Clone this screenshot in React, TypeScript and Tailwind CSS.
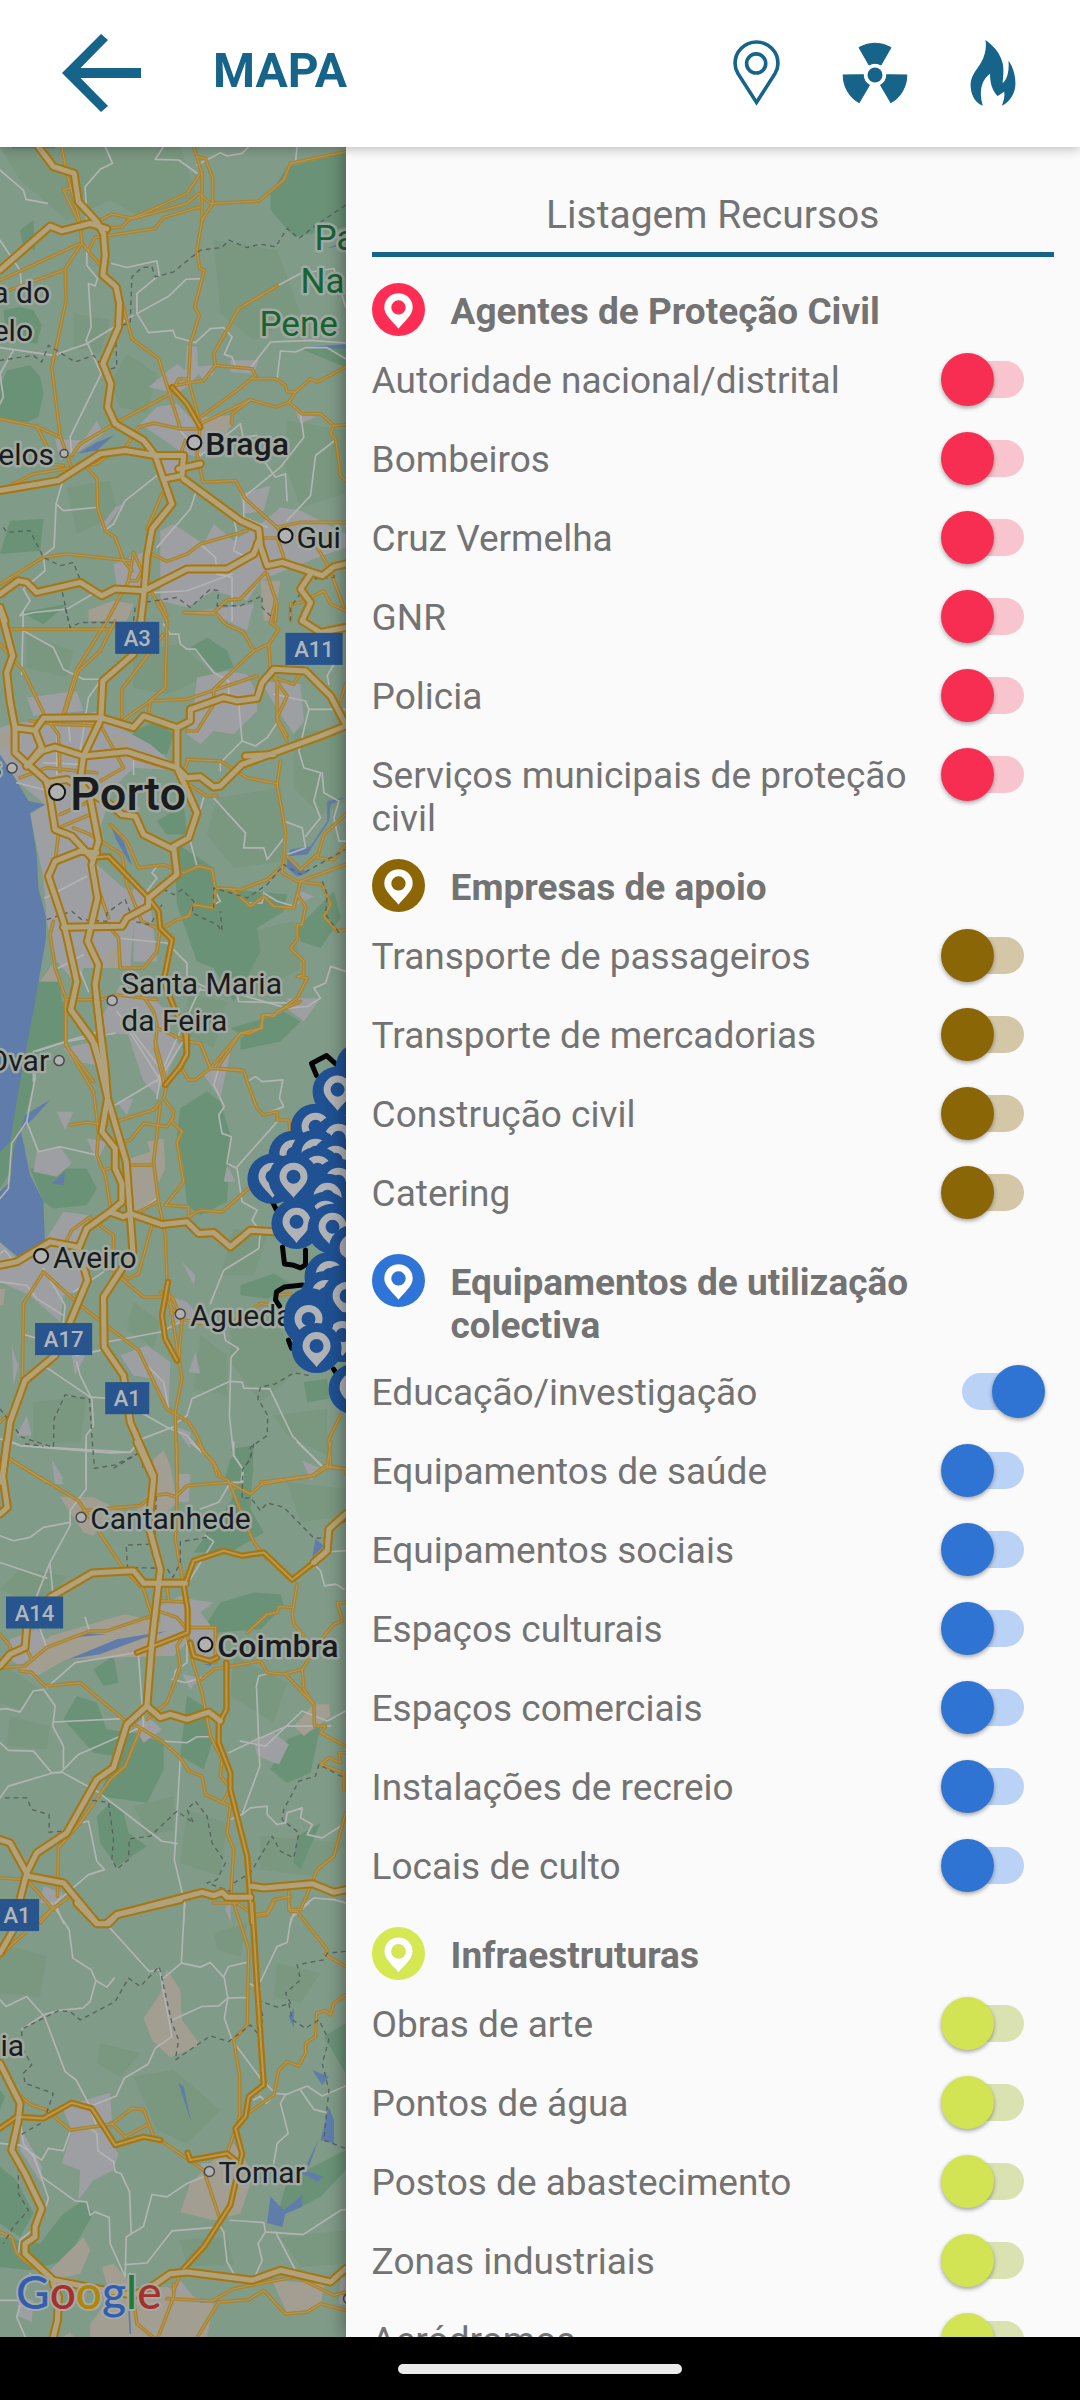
import { useState } from "react";

type Tile = {
  y: number;
  hills: string[];
  forest: string[];
  urban: string[];
  sand: string[];
  water: string[];
  local: string[];
  regional: string[];
  trunk: string[];
  motorway: string[];
  border: string[];
};

/* Each tile holds its shapes in a grid three times finer than the map's own. */
const tiles: Tile[] = [
  {
    y: 140,
    hills: [
      "0,20 540,20 600,200 420,230 330,180 200,240 60,120",
      "640,300 830,330 900,520 760,600 660,520",
      "380,640 470,700 440,820 360,800 330,730",
      "860,840 1035,870 1035,1060 900,1100 850,960",
      "200,1040 330,1020 350,1120 230,1180",
      "220,520 330,540 300,640 220,620",
    ],
    forest: [
      "860,80 1035,40 1035,260 940,280 880,290 810,210 810,160",
      "10,510 60,500 100,510 125,555 110,610 20,600",
      "0,740 20,690 90,675 120,710 130,760 115,830 70,850 0,830",
      "30,1140 130,1135 120,1230 0,1240",
      "900,625 1035,620 1035,680 960,650",
      "60,270 100,240 105,330 70,320",
    ],
    urban: [
      "445,740 530,670 555,690 560,615 590,620 595,700 570,730 530,760",
      "470,800 530,790 600,860 700,850 600,950 550,940 420,850",
      "690,660 775,660 760,700 690,695",
      "580,680 640,675 640,700 610,720",
      "165,895 250,900 290,840 310,880 240,930 180,960",
      "480,1170 520,1150 610,1210 640,1150 700,1200 780,1150 840,1100 900,1110 1035,1180 1035,1220 900,1270 780,1320 740,1380 640,1350 560,1400 480,1380",
      "340,1270 440,1230 440,1340 350,1340",
      "720,1060 810,1035 790,1110 730,1120",
      "345,1100 370,1090 310,1170 300,1160",
      "880,800 945,830 900,850",
      "480,950 540,960 540,1010 490,1020",
    ],
    sand: [
      "265,1410 340,1380 370,1440 265,1440",
      "600,830 690,825 680,880 600,870",
      "780,1320 840,1320 820,1440 790,1440",
    ],
    water: [
      "232,940 290,905 340,885 290,930",
      "915,620 1035,612 1035,625",
      "980,325 1035,300 1030,315",
      "36,20 165,20 165,25 36,25",
    ],
    local: [
      "0,90 70,150 78,178 142,190",
      "315,20 337,70 300,88 255,140 260,250",
      "490,20 465,58 535,60 598,105",
      "590,75 660,38 680,48 725,40 745,20",
      "890,20 885,65",
      "260,320 260,375 292,415 285,437 265,430 273,560 258,600 303,700 210,890 215,940",
      "335,370 380,382 470,362 477,405",
      "607,415 558,417 505,468 410,520 445,577 518,570 525,590 585,607 630,565 670,562 695,590 672,642 695,650 708,685",
      "410,520 410,460 470,410",
      "400,525 260,610 160,645 0,622",
      "0,300 60,390 65,440",
      "830,437 900,400 1000,385 1035,500",
      "750,683 810,605 930,600 1035,608",
      "830,715 840,632 885,635 915,622 980,622 1035,655",
      "900,820 910,890 840,980 730,1070 730,1130 800,1160",
      "1003,900 945,945 930,1065 860,1140",
      "540,870 600,945 720,850 728,890 770,885",
      "470,1005 375,1080 340,1150 315,1168",
      "185,1030 168,1090 190,1110 295,1100",
      "168,1090 162,1220 130,1245 135,1290 70,1345 90,1380 60,1425 100,1415 200,1405 295,1350",
      "585,1060 570,1105 470,1220",
      "600,1210 645,1250 650,1300 695,1310 695,1440",
      "790,960 825,1010 855,1000 860,1080",
      "432,1357 560,1350 695,1300",
      "0,790 10,770 0,700 40,630",
      "700,1130 710,1180 700,1230 740,1250",
    ],
    regional: [
      "185,20 200,100 240,245 245,310 195,385 198,480 155,680 180,885 212,975",
      "215,142 190,150 235,245",
      "580,20 605,100 605,240 590,330 598,385 612,390 583,500 597,525 570,610 565,720 600,850 590,940 608,1025 705,1020 735,1075 830,1160",
      "590,50 615,55 637,115 637,190 605,240",
      "1035,35 870,70 850,120 775,183 630,190 595,160 560,190 400,235 335,222 290,245",
      "600,100 560,160 430,220 390,235 365,260 320,265",
      "600,200 490,232 465,265 285,292 265,330",
      "0,420 240,310",
      "0,460 190,390",
      "245,310 300,375",
      "350,430 395,595 475,655 505,750 540,865",
      "0,835 110,858 180,890",
      "110,858 150,935",
      "0,960 60,960 190,975",
      "525,735 535,715 565,715",
      "520,755 360,840 240,910 215,945",
      "600,865 540,865 460,848 415,860 370,930",
      "830,437 715,505 640,640 645,675 755,685 765,705 710,750 600,830",
      "645,675 610,720 525,735",
      "755,715 825,715 855,735 860,755 885,755 865,785 825,800 750,778 600,850",
      "885,755 930,715 950,725 1035,680",
      "865,785 905,820 960,820 1000,855 1035,853",
      "1000,855 990,880 1005,895 1020,1005 1035,1020",
      "260,980 290,1015 293,1105 315,1170 345,1190 370,1260 395,1290",
      "0,1330 130,1250 200,1240 390,1260",
      "485,1060 440,1165",
      "455,1240 500,1262 560,1240 600,1210 740,1170",
      "850,1192 830,1160 900,1145 1035,1145",
      "780,1192 830,1192 850,1250",
      "330,940 290,970 260,975 100,1000 40,1030",
      "320,1440 385,1320 400,1235 425,1290 410,1320 385,1320",
      "455,1355 500,1440",
      "795,1295 720,1375 680,1378 640,1415 550,1415",
      "800,1300 830,1390 825,1440",
      "950,1220 985,1280 1030,1400",
      "870,1440 870,1390 900,1385 970,1350 990,1390 1035,1410",
      "695,850 695,820 750,778",
      "555,900 540,945",
    ],
    trunk: ["515,740 560,790 600,860"],
    motorway: [
      "115,20 160,80 222,100 235,185 290,245 310,280 315,345 308,405 348,440 358,490 355,560 308,670 332,730 322,800 345,850 430,900 465,945 515,1090 455,1165 440,1250 432,1350 422,1440",
      "0,390 150,258 185,272 270,250 320,266",
      "0,1050 175,1020 300,940 375,930 465,945 550,945 545,1005 495,1015",
      "535,985 600,970",
      "550,1015 720,1140 775,1165 780,1215 800,1275 845,1265 965,1305 1000,1278 1035,1270",
      "775,1200 760,1240 680,1285 560,1285 432,1350 345,1345 305,1365 240,1325 110,1355 80,1325 55,1320 0,1360",
      "930,1300 900,1345 930,1385 905,1440",
      "0,1400 15,1440",
    ],
    border: [
      "1035,195 940,260 895,295 860,265 825,320 780,312 740,322 685,300 665,322 600,330 520,395 465,410 455,380 425,382 395,410 390,545 345,565 350,680 315,690 280,645 225,665 145,615 125,665 100,645 0,660",
      "10,1160 20,1175 90,1170 130,1250 180,1275 220,1265 245,1330 185,1345 205,1440",
      "400,1440 405,1400 430,1385 530,1370 570,1400 630,1345 655,1350 650,1395 720,1395 785,1365 785,1400 820,1435",
      "870,1440 870,1400 930,1315 1000,1310 1005,1275 1035,1265",
    ],
  },
  {
    y: 600,
    hills: [
      "650,590 840,560 850,780 700,800 620,700",
      "880,380 1035,400 1035,600 960,640 880,560",
      "400,150 540,130 640,220 500,280 400,260",
      "700,1000 880,960 900,1100 760,1180",
      "80,100 220,150 200,230 80,200",
      "560,1180 680,1200 640,1340 560,1300",
    ],
    forest: [
      "65,35 200,10 130,70",
      "470,660 550,610 560,700 500,700",
      "520,720 640,800 650,860 860,880 850,930 770,980 780,1050 700,1200 640,1100 590,1080 530,910",
      "110,1140 180,1140 195,1310 80,1350",
      "890,980 1000,870 1020,950 960,1040 900,1020",
      "720,1310 850,1230 900,1260 840,1320 720,1345",
      "570,140 620,110 680,150 700,200 650,215",
      "400,390 470,360 520,400 500,460 400,440",
    ],
    urban: [
      "30,370 180,350 300,330 340,370 450,430 520,490 560,510 400,500 340,560 300,680 290,790 370,860 450,880 400,970 390,1100 250,1100 230,1150 170,1080 140,960 130,830 90,640 135,610 50,540 0,460 0,380",
      "80,290 230,270 250,330 100,345",
      "590,230 680,210 740,220 770,280 770,330 700,400 640,390 600,430 560,400 580,320",
      "780,240 900,250 910,360 880,400 840,340",
      "400,860 450,900 470,1080 400,1080",
      "280,1290 360,1150 460,1190 510,1240 500,1440 460,1440 390,1300",
      "860,1190 960,1190 910,1260 860,1220",
      "600,30 760,10 740,90 680,60",
      "900,870 940,885 890,910",
    ],
    sand: [
      "260,30 340,0 400,10 380,60 290,60",
      "340,400 380,410 380,450 330,450",
      "120,1140 160,1085 180,1140",
      "0,390 20,395 30,430 0,450",
      "320,1060 350,1030 355,1100 320,1100",
      "340,600 420,620 400,660 350,640",
    ],
    water: [
      "0,460 50,540 85,600 135,610 90,635 110,760 115,860 138,950 138,1010 105,1200 75,1350 50,1440 0,1440",
      "330,670 370,720 395,790 385,780 350,720",
      "870,745 930,735 980,660 980,600 1035,590 990,610 985,660 920,760 860,765",
      "860,765 920,815 890,825 860,800",
    ],
    local: [
      "70,30 65,220",
      "70,90 160,140 190,205 250,235 300,235",
      "490,70 510,100 535,100 540,130 560,145 585,145 640,215 685,240 685,290",
      "820,280 915,300 925,325 1035,325",
      "925,325 895,450 910,500 960,515 940,600 960,650 915,705",
      "715,310 725,420 660,485 660,510",
      "725,420 765,435 800,410 830,365",
      "635,585 735,695 730,740 790,740 800,775 855,705",
      "610,590 570,720 590,795",
      "205,370 210,420",
      "300,240 265,290 240,450",
      "850,660 905,680 915,740 860,760",
      "965,515 970,575 1015,600 1000,650 1015,720 1035,720",
      "130,485 240,490",
      "400,470 400,520",
      "50,545 130,565",
      "170,400 170,520",
      "135,890 260,825",
      "350,1010 500,1025 560,1085 560,1130 620,1160",
      "100,1440 100,1350 195,1320 300,1290",
      "350,1230 480,1400",
      "560,1170 600,1165 720,1180 860,1220 920,1215 960,1190 940,1160 975,1145 990,1095 1035,1110",
      "600,1160 470,1440",
      "470,795 455,815 470,830 440,870",
      "645,870 660,900 640,910",
      "740,905 785,905 790,875 830,900 880,915",
      "985,250 980,225 1000,190",
      "175,1100 250,1060",
      "240,1110 265,1170",
      "710,1180 715,1200 860,1205",
    ],
    regional: [
      "30,85 330,85",
      "320,60 230,205 180,370",
      "345,60 300,150 235,210 195,335",
      "500,60 495,260 450,300 365,360",
      "490,100 365,265 365,350",
      "0,130 70,210 135,345 175,400 180,510",
      "450,300 560,295 770,225",
      "450,300 445,345",
      "90,360 180,370 300,375",
      "305,380 370,500 300,540",
      "400,470 500,500",
      "560,390 590,390 640,310 640,265",
      "640,265 760,150 730,95 675,70 650,40 550,35",
      "760,150 805,130 835,85 810,65 825,0",
      "805,130 810,205",
      "830,240 830,360 860,420",
      "820,230 860,285 830,350 860,405",
      "840,480 830,550 855,690 850,770 845,815 890,840 965,850 990,910 970,945 1010,990 1035,985",
      "560,475 660,480 700,505 740,530 830,548",
      "550,510 565,475",
      "220,680 270,700 365,760 380,850 425,960 470,980",
      "330,670 380,720 415,800 490,790 550,815 595,795 635,805 645,860 720,865 800,835 850,790",
      "645,860 640,920 580,910 565,945 530,955 480,985",
      "690,860 750,915 790,885 820,915 880,920 900,840 1035,790",
      "890,880 915,915 905,970 890,970 890,1015 870,1040 910,1080 910,1120 890,1125 920,1130 890,1190 820,1240 785,1240 785,1280 720,1295 650,1400 720,1405",
      "1035,730 1000,775 950,770 970,700 1035,640",
      "860,765 900,805 950,760",
      "175,700 165,780",
      "175,680 270,640",
      "60,530 140,500 290,515",
      "180,640 270,600",
      "160,960 150,1000 165,1100 197,1190 197,1330 280,1440",
      "197,1195 300,1195 350,1180 470,1195",
      "275,800 290,850 325,950",
      "330,980 355,1010 360,1100 430,1100 470,1050 480,985",
      "420,1170 460,1230 470,1270 465,1340 490,1440",
      "470,1280 560,1320 600,1325 630,1400",
      "550,540 620,585 650,585",
      "820,230 880,250 900,215",
      "1035,250 1020,300",
      "480,0 500,45",
    ],
    trunk: ["290,768 325,765 445,890 475,930 480,980 515,1015 490,1140 555,1300 560,1360 540,1395"],
    motorway: [
      "422,60 400,160 308,240 302,355 250,465 240,540 270,590 295,720 275,790 292,890 262,1020 295,1090 285,1150 300,1290 315,1440",
      "0,20 38,165 20,215 30,300 45,380 45,455 140,540 150,590 165,685 215,705 275,770",
      "45,380 105,388 130,352 302,350 400,380 430,345 530,380 570,360 570,325 670,290 710,300 770,292 785,245 820,205 915,210 990,285 1035,370",
      "530,380 530,500 590,635 565,710 520,735 530,820 445,890 445,915 380,950 365,975 190,978",
      "105,388 125,440 80,495",
      "80,495 125,450 165,438 250,465 380,452 530,500 560,530 600,527 640,558 660,555 725,490 850,445 960,405 1035,375",
      "240,750 165,780 145,825 190,960 230,1140 212,1225 275,1310 315,1440",
      "240,750 290,755",
      "140,545 200,535 330,610 365,640 405,645 430,700 520,745",
      "905,60 960,95 1035,80",
      "735,465 820,460",
    ],
    border: [
      "195,20 210,80 240,65 345,65",
      "140,955 215,930 245,955 320,960 320,935 375,895 400,960 450,970 485,910",
      "450,890 480,860 520,880 545,865 580,900 575,935 650,970 665,990 660,930",
      "640,920 640,860 740,890 800,850 850,790 900,820 1035,745",
      "965,840 980,880 975,940 1020,1000",
    ],
  },
  {
    y: 1000,
    hills: [
      "690,960 840,980 900,1100 780,1200 690,1080",
      "700,680 800,700 760,820 660,820",
      "100,1200 260,1180 240,1320 100,1320",
      "600,1000 680,1060 680,1180 580,1160",
      "400,900 480,960 460,1040 380,980",
      "820,1240 980,1220 980,1360 860,1300",
    ],
    forest: [
      "105,0 190,0 197,120 130,150 70,360 30,440 50,250",
      "540,320 620,270 660,300 690,400 680,600 600,640 560,610 550,500 530,400",
      "720,850 820,815 880,850 800,890 720,880",
      "0,400 60,380 75,440 0,560",
      "90,500 260,500 290,560 260,610 160,620 130,600",
      "690,1370 740,1340 760,1400 750,1440 670,1440",
      "910,1140 980,1130 985,1190 920,1200",
      "690,80 830,40 860,70 760,120",
    ],
    urban: [
      "110,450 180,435 215,485 170,525 100,510",
      "0,800 120,740 190,630 270,640 240,740 260,860 190,880 180,960 90,880 0,840",
      "0,720 50,770 0,800",
      "360,1060 440,1030 510,1080 505,1220 460,1130 400,1120",
      "610,220 690,150 660,290",
      "380,90 500,90 540,130 470,280 430,240",
      "170,330 220,330 195,385",
      "190,140 280,120 290,190 220,180",
      "260,410 320,420 290,480",
      "565,1110 585,1050 600,1115",
      "50,1300 80,1240 95,1300",
      "155,1370 190,1430 165,1440",
      "545,780 585,820 580,850",
      "500,880 560,900 620,970 520,960",
      "350,300 400,290 380,340",
      "215,1060 255,1060 225,1120",
      "520,1270 570,1290 570,1340",
      "670,540 680,490 705,540",
      "35,1030 55,1090 40,1150",
    ],
    sand: [
      "440,420 490,410 495,500 465,560 470,600 400,630 390,470 450,450",
      "460,1380 490,1345 505,1440 450,1440",
      "0,860 15,860 10,910 0,910",
    ],
    water: [
      "0,0 105,0 60,240 30,420 0,450",
      "60,380 90,520 130,600 135,730 60,770 0,720 0,570 30,540 40,450",
      "75,340 150,295 100,350 60,390",
      "155,545 195,510 190,550",
    ],
    local: [
      "110,160 105,230 80,360 35,425 25,560 0,590",
      "80,360 115,450 180,435 290,460",
      "110,150 200,120 345,95",
      "345,310 480,230 560,100",
      "655,200 640,250 672,315 655,340 665,395 693,405 680,485 710,500 725,600 770,625 755,655 780,690 775,740 670,805 630,905",
      "710,495 830,360",
      "740,240 765,225 785,240 847,235 837,290 850,315 800,335",
      "670,985 675,1015 715,1040 692,1065 687,1240 700,1360 727,1400 727,1440",
      "687,1138 725,1140 730,1158 808,1160 875,1300 970,1400",
      "687,1138 575,1190 560,1240 525,1265",
      "0,840 80,850 110,890 190,940",
      "130,800 195,910 190,960",
      "65,995 130,1015 230,1060 300,1045 320,1020 480,990 540,960",
      "130,1090 270,1185 350,1190 500,1275 560,1300 605,1350",
      "230,1080 240,1120 275,1190 280,1270 258,1300 258,1440",
      "0,1310 60,1330 390,1350 425,1310 530,1270",
      "430,1080 490,1140 505,1220",
      "400,640 470,590",
      "385,85 480,235 470,290",
      "220,870 310,810",
      "0,755 15,745 50,790",
    ],
    regional: [
      "197,0 197,130 280,270 295,390 290,460 315,520 330,610",
      "465,120 500,250 490,290 520,330 515,360 545,390 530,420 550,540 495,610 565,615 565,645 600,625 665,630 750,555",
      "480,310 460,480 475,600 495,700 500,840 545,1130 525,1230 530,1440",
      "345,360 460,325 480,300",
      "210,370 260,362 320,370",
      "355,425 390,415 430,365 500,375 520,345",
      "380,490 455,490",
      "310,505 345,495",
      "540,195 565,235 585,235 630,200 730,208 740,240 770,320 790,340 830,330 830,355 865,355 870,400",
      "560,120 600,125 630,200 720,95 750,95 780,80 790,40 820,45 830,30 900,0",
      "400,640 470,600",
      "455,670 415,815 385,830 330,800",
      "270,650 340,700 340,760",
      "270,645 215,685 195,725",
      "130,810 70,905 67,1130",
      "130,810 240,910 415,1045 500,1220 565,1260 590,1300 610,1350 640,1380 660,1420",
      "340,810 430,885 515,885 545,950 535,1080",
      "480,870 540,950 600,965 690,965 780,905 830,910",
      "30,1370 140,1440",
      "0,1260 20,1240",
      "1020,1240 985,1310 990,1390",
      "780,1440 935,1420 975,1390 1035,1400 1035,1415",
      "830,880 870,875",
    ],
    trunk: ["560,100 560,155 540,195 495,250", "503,840 485,940 495,1010 530,1075"],
    motorway: [
      "212,25 285,130 322,290 305,390 345,440 345,500 365,545 365,600 330,630 260,680 235,740 262,835 210,960 165,1060 75,1135 30,1260 5,1440",
      "290,0 315,200 322,290 378,480 390,640 398,750 310,885 312,1035 370,1120 390,1260 460,1420",
      "330,630 370,645 390,635 485,668 560,660 595,695 640,692 690,735 750,685 820,690",
      "0,790 50,780 150,720 230,735",
    ],
    border: [
      "0,1220 65,1305 160,1335 162,1250 195,1178 268,1192 275,1300 283,1398 345,1388 420,1350 430,1400 465,1425",
      "925,1120 880,1112 825,1145 780,1155 772,1190 802,1240 800,1300 750,1335 750,1370 727,1400",
    ],
  },
  {
    y: 1440,
    hills: [
      "60,380 200,400 140,500 0,440",
      "860,120 1035,140 1035,220 900,240",
      "0,660 120,740 60,800 0,780",
      "400,1090 520,1060 520,1160 440,1180",
      "700,640 860,720 820,840 690,760",
      "560,1100 680,1140 660,1300 540,1260",
      "30,820 150,850 140,920 20,910",
      "780,1180 1035,1200 940,1300 780,1280",
    ],
    forest: [
      "690,20 760,10 750,200 790,270 690,330 580,330 690,180 730,80",
      "660,480 760,450 840,455 850,490 780,560 650,570 620,540",
      "190,830 230,760 290,780 320,860 400,870 490,900 490,980 440,1080 300,1060 340,940 280,930",
      "290,1120 330,1080 370,1110 385,1170 440,1210 350,1270 300,1200",
      "280,680 340,640 355,720 310,730",
      "560,760 610,790 635,900 610,980 540,940",
      "810,980 860,890 960,850 930,990 860,1020",
      "880,1260 890,1180 960,1140 900,1280",
    ],
    urban: [
      "480,490 540,460 570,470 640,480 600,510 640,560 640,640 570,650 560,600 520,640 490,640 480,540",
      "155,55 190,125 165,125",
      "30,590 110,560 150,600 60,670 30,650",
      "760,890 820,870 865,905 835,965 770,940",
      "400,850 440,820 485,860 430,900",
      "535,95 570,95 565,180 535,180",
      "905,55 965,80 930,115",
      "545,695 600,705 570,740",
      "130,1330 190,1350 170,1385 120,1380",
      "675,1390 690,1390 690,1440",
    ],
    sand: [
      "180,165 280,165 350,200 280,280 250,270",
      "460,50 490,25 510,70 530,180 440,270 410,200 460,130",
      "60,680 150,580 375,515 480,540 495,640 200,650 100,705",
      "880,850 940,785 985,785 990,820 910,880",
    ],
    water: [
      "205,650 350,590 500,565 420,590 300,635",
      "220,585 260,572 320,575",
      "935,345 945,290 970,310",
      "608,664 635,664 630,670",
    ],
    local: [
      "40,0 60,10 330,32 390,30 410,5",
      "258,0 258,140 210,205 210,250 150,360 110,460",
      "210,240 130,255 90,285 40,295 0,280",
      "0,360 140,407",
      "150,365 158,450",
      "700,0 700,40 727,80 722,120 690,120 655,180 600,200",
      "890,0 970,75",
      "570,0 610,35",
      "615,280 640,297 570,410",
      "120,560 140,615",
      "255,525 268,565",
      "410,630 225,660 140,735",
      "415,640 430,850 235,935 180,990 160,990 25,1030 0,1065",
      "0,800 20,798 60,808 100,745 130,740 165,790 158,850 190,910 190,975",
      "160,838 370,828",
      "0,900 25,923 100,925 155,990 185,988 290,1045 485,1195 530,1202",
      "540,945 522,1250 553,1380 550,1440",
      "485,895 560,900 590,882 630,882",
      "560,600 560,660 525,685 517,740",
      "515,710 555,720 605,705",
      "820,688 775,700 768,730 778,970 725,1115 690,1130",
      "725,1115 750,1095 800,1090 800,1115 830,1145 855,1140 860,1110 905,1095 900,1125 935,1145 920,1175 965,1185 1020,1150",
      "1035,805 980,835 905,805 795,910 720,895",
      "990,850 860,850 770,890 685,930",
      "940,365 960,385 972,430 1005,425 1030,440",
      "985,328 1035,325",
      "240,1140 265,1135 290,1255 313,1280 265,1295 165,1380 190,1440",
      "870,1440 880,1410 940,1365 1000,1370 1035,1380",
    ],
    regional: [
      "20,45 235,175 370,380 430,440 455,520",
      "250,205 420,190 455,160 500,155 530,165",
      "530,0 530,170 525,290 550,430",
      "530,160 560,130 685,120 750,155 785,125 940,100 980,75 1035,80",
      "980,75 990,0",
      "590,0 640,65 650,100 685,115 730,230 760,300 800,350",
      "890,425 875,515 880,545 910,580",
      "875,495 835,492 830,510 800,515 740,570",
      "455,520 320,565 270,565 140,615 75,670 0,675",
      "0,575 30,610 35,640",
      "80,620 95,650",
      "60,685 95,690 135,730 240,720 370,830 420,855 485,895 540,945 565,985 605,1000 615,1055 690,1090",
      "420,860 375,970 330,1010 240,1140 175,1215 172,1360",
      "560,570 575,650 605,750 630,880 665,950 660,1000 685,1030",
      "690,1090 680,1170 700,1220 690,1380",
      "690,1040 665,1080",
      "555,570 530,610 540,670 515,740 500,780 440,830",
      "570,555 645,555 645,660",
      "605,710 640,680 780,655 800,690 850,695 905,680 910,740 940,785 942,850 975,850 960,870 1035,910",
      "855,695 940,785",
      "1035,480 1010,480 1025,535 1000,545 970,580 905,680",
      "480,475 550,478",
      "500,430 505,475",
      "480,508 530,525 560,560",
      "1035,930 1015,930 1020,960 985,945 960,965 1030,990 1030,1040",
      "1035,1110 1000,1240 950,1280 930,1330",
      "0,1305 80,1310 160,1400",
      "640,1380 710,1380 760,1415 800,1410 820,1370 870,1360",
      "865,1345 865,1400 900,1400 930,1330",
      "120,1440 155,1400 210,1360",
    ],
    trunk: [
      "555,422 580,355 670,325 725,340 790,330 875,412 940,360",
      "550,430 562,500 562,570 410,630",
      "570,600 580,640 630,655 650,645",
      "660,835 678,800 678,660",
      "655,835 655,900 690,990 690,1040 740,1240 755,1440",
    ],
    motorway: [
      "20,0 8,100 22,195 0,215",
      "410,0 460,110 445,250 480,380 475,425 455,600 440,790 380,845 340,975 290,1010 200,1170 110,1230 80,1290 60,1370",
      "0,670 30,635 75,615 80,555",
      "150,465 275,392 400,385 430,422 555,422",
      "940,360 980,325 985,260 1035,215",
      "440,790 480,825 510,815 560,830 625,808 660,835",
      "0,1190 30,1200 85,1300 190,1320 290,1440",
      "755,1330 790,1335 935,1322 1000,1348 1035,1340",
      "320,1440 350,1415 605,1348 640,1358 665,1348 680,1363 750,1363",
    ],
    border: [
      "75,5 130,12",
      "340,78 420,30",
      "467,110 468,160 463,305 378,308 382,375 500,378 518,405 540,360 540,298 620,285 620,270",
      "760,5 750,50 727,80 725,170 750,165 780,205 800,182 850,195 940,287 980,287 985,265 1035,235",
      "15,1065 80,1065 95,1100 147,1115 147,1168 190,1165 255,1070 325,1078 340,1190 335,1250 350,1278 385,1250 387,1188 450,1180 530,1105 580,1140 560,1100 585,1075 620,1120 635,1200 675,1260 650,1310 620,1320 690,1345",
      "700,1320 750,1290 815,1180 840,1225 880,1245 895,1170 845,1130 850,1100 895,1015 945,1000 955,965 1030,1005",
    ],
  },
  {
    y: 1900,
    hills: [
      "0,120 140,160 120,280 0,270",
      "300,420 420,450 360,520 290,480",
      "640,90 740,60 720,160 650,140",
      "400,520 520,500 660,620 560,720 470,680",
      "830,180 960,210 900,300 820,280",
      "540,1010 680,1000 700,1080 560,1090",
      "840,1000 1035,980 1035,1080 900,1090",
    ],
    forest: [
      "970,400 1035,360 1035,510",
      "0,790 50,830 100,930 60,1000 0,960",
      "0,1000 120,1020 190,930 250,890 280,930 200,1070 90,1100 0,1090",
      "860,830 1035,740 1035,800 960,880 880,920 830,940",
      "0,560 15,580 0,620",
    ],
    urban: [
      "185,610 330,568 335,650 300,670 355,750 340,800 280,830 235,890 240,800 185,780 215,680",
      "60,670 125,790 125,840 60,740",
      "675,20 690,0 690,55",
      "540,1130 580,1180 500,1180",
      "1020,1120 1035,1120 1035,1205 1015,1200",
      "600,780 660,775 660,830 610,820",
      "55,1180 100,1190 95,1255 50,1235",
    ],
    sand: [
      "500,200 540,260 545,350 600,425 510,462 455,410 430,345 480,270",
      "570,840 640,770 700,720 760,810 720,930 640,950 540,925",
      "150,1100 250,1000 270,1040 240,1110 160,1130",
      "270,1260 330,1180 305,1090 340,1080 400,1150 500,1150 640,1200 620,1300 270,1310",
      "815,1130 970,1140 960,1210 860,1230",
      "175,1310 210,1285 230,1310",
    ],
    water: [
      "535,540 550,550 572,655",
      "935,500 985,520 965,545",
      "985,610 1000,650 1000,720 960,710",
      "865,340 880,315 880,375",
      "810,880 850,920 905,875 905,910 855,930 845,970 800,958",
      "910,800 970,820 950,835 870,790",
      "955,705 925,790 920,780",
      "600,1193 720,1187 720,1191 600,1197",
      "383,1200 388,1200 393,1290 388,1290",
    ],
    local: [
      "155,0 207,80 218,165 273,200 287,232 270,295 248,315 175,322 130,335 65,378",
      "287,232 320,252 342,225",
      "0,290 18,310 80,280 133,340 195,505 228,530 265,600 290,670",
      "325,70 447,205 478,200 515,400 465,435 443,483 372,525 348,578 280,605",
      "553,0 543,180 490,225",
      "545,180 600,192 630,178 672,225 682,285 672,345 695,410 780,525 825,570 860,573 920,548 965,578 1035,548",
      "512,352 605,310 655,308 682,285 745,283",
      "670,220 685,190 743,177",
      "745,240 780,258",
      "780,235 830,130 860,118 872,45 925,0",
      "855,573 840,600 863,690 830,720 820,780",
      "900,560 940,618 975,627",
      "760,590 780,578 797,600 820,578",
      "0,720 60,725 125,770 145,735 190,742 212,680",
      "265,670 290,690 293,742 340,775 345,805 362,810 388,865 393,990",
      "60,650 70,720 100,760 125,820 225,892 260,895 270,935 285,925 327,942 330,1020 375,1120 378,1000 430,968 455,873 500,880 560,840 620,815",
      "375,1083 440,1078 515,982 660,970",
      "690,950 790,957 795,985 908,993 1020,920 1035,918",
      "660,970 670,985 680,1075 700,1110",
      "795,985 773,1020 785,1070 765,1115",
      "825,985 885,1100",
      "100,750 145,885 120,960",
      "90,985 60,1010 55,1050",
      "0,1190 60,1190",
      "90,1110 50,1240 80,1310",
    ],
    regional: [
      "35,560 95,605 140,620 210,680 335,662 395,615 430,618 460,700",
      "335,660 375,700 440,665",
      "480,710 610,800 660,950",
      "0,160 40,120 165,10",
      "700,0 745,140 740,365 700,410 718,520 718,640 680,750",
      "735,635 820,575 835,500 860,475 895,488 915,450 915,420 945,400 948,330 975,322 990,335 1000,300 1035,275",
      "765,40 800,35 820,0",
      "865,0 870,25 890,25 980,140 975,155 1035,190",
      "0,985 35,1000 50,1050 100,1090",
      "520,1140 520,1180 470,1310",
      "500,1185 635,1192 700,1155 880,1120",
      "585,1310 655,1195 745,1188 790,1160 855,1230 920,1225 960,1200 1035,1220",
      "890,1120 1000,1175 1035,1165",
      "400,1190 410,1260 470,1310",
      "550,1090 520,1160",
      "200,1200 245,1160",
    ],
    trunk: [
      "755,0 770,250 790,545 745,580 735,640 705,675 725,750 690,905 610,1030 550,1095",
      "0,675 50,640 130,645 215,598 275,615 345,725 430,700 480,710",
      "562,748 570,770 680,750 705,770",
    ],
    motorway: [
      "40,80 0,150",
      "230,0 290,62 325,62 350,35 540,-10",
      "0,480 60,600 55,650 35,740 75,810 125,915 105,970 105,1000 75,1020 75,1050 160,1130 290,1155 400,1175 460,1145 510,1110 560,1105 755,1130 840,1100 990,1135 1035,1095",
      "160,1140 175,1180 172,1250 155,1320",
    ],
    border: [
      "1035,145 980,150 970,170 890,185 900,230 855,270 870,300 830,312 770,290",
      "865,300 875,350 915,375 955,350 985,410 965,480 985,560 970,710 1035,735",
      "775,300 788,340 775,395 750,365 685,415 630,398 525,470 535,410 515,360 477,190 420,250 385,225 345,295 240,350 210,325 175,322 65,378 65,430 95,485 70,510 75,540 160,570 130,655 35,710 55,790 55,870 85,920 40,970 10,1020",
    ],
  },
];

type LayerKey = Exclude<keyof Tile, "y">;

const areaLayers: { key: LayerKey; fill: string }[] = [
  { key: "hills", fill: "#7a9780" },
  { key: "forest", fill: "#6a9276" },
  { key: "urban", fill: "#9d9fa2" },
  { key: "sand", fill: "#a39e92" },
  { key: "water", fill: "#5f7cab" },
];

const lineLayers: { key: LayerKey; stroke: string; width: number; dash?: string }[] = [
  { key: "local", stroke: "#b2b4b2", width: 5 },
  { key: "regional", stroke: "#aa8430", width: 11 },
  { key: "regional", stroke: "#b39a5c", width: 3 },
  { key: "border", stroke: "#59625e", width: 4, dash: "14 12" },
  { key: "trunk", stroke: "#a9760d", width: 19 },
  { key: "motorway", stroke: "#a9760d", width: 27 },
  { key: "trunk", stroke: "#b29a5c", width: 6 },
  { key: "motorway", stroke: "#afa27d", width: 15 },
];

type Town = {
  text: string;
  x: number;
  y: number;
  size: number;
  weight?: number;
  anchor?: "start" | "end";
  color?: string;
};

const towns: Town[] = [
  { text: "a do", x: 50, y: 303, size: 30, anchor: "end" },
  { text: "elo", x: 33, y: 341, size: 30, anchor: "end" },
  { text: "Pa", x: 314, y: 250, size: 35, color: "#176332" },
  { text: "Na", x: 300, y: 293, size: 35, color: "#176332" },
  { text: "Pene", x: 259, y: 336, size: 35, color: "#176332" },
  { text: "Braga", x: 205, y: 454, size: 32, weight: 500 },
  { text: "elos", x: 54, y: 464, size: 30, anchor: "end" },
  { text: "Gui", x: 296, y: 547, size: 30 },
  { text: "s", x: 2, y: 776, size: 30, anchor: "end" },
  { text: "Porto", x: 70, y: 809, size: 47, weight: 500 },
  { text: "Santa Maria", x: 121, y: 993, size: 30 },
  { text: "da Feira", x: 121, y: 1029, size: 30 },
  { text: "Ovar", x: 49, y: 1069, size: 30, anchor: "end" },
  { text: "Aveiro", x: 53, y: 1266, size: 30 },
  { text: "Agueda", x: 190, y: 1324, size: 30 },
  { text: "Cantanhede", x: 90, y: 1527, size: 30 },
  { text: "Coimbra", x: 217, y: 1654, size: 32, weight: 500 },
  { text: "ia", x: 24, y: 2053, size: 30, anchor: "end" },
  { text: "Tomar", x: 218, y: 2180, size: 30 },
];

const dots = [
  { x: 194, y: 442, r: 7, big: true },
  { x: 64, y: 453, r: 4, big: false },
  { x: 285, y: 535, r: 7, big: true },
  { x: 12, y: 767, r: 5, big: false },
  { x: 57, y: 791, r: 8, big: true },
  { x: 112, y: 999, r: 5, big: false },
  { x: 59, y: 1059, r: 5, big: false },
  { x: 41, y: 1254, r: 7, big: true },
  { x: 180, y: 1312, r: 5, big: false },
  { x: 81, y: 1515, r: 5, big: false },
  { x: 205, y: 1642, r: 7, big: true },
  { x: 209, y: 2168, r: 5, big: false },
  { x: 348, y: 2295, r: 5, big: false },
];

const shields = [
  { text: "A3", x: 115, y: 621, w: 44 },
  { text: "A11", x: 285, y: 632, w: 57 },
  { text: "A17", x: 35, y: 1321, w: 57 },
  { text: "A1", x: 105, y: 1380, w: 44 },
  { text: "A14", x: 6, y: 1594, w: 57 },
  { text: "A1", x: -5, y: 1896, w: 44 },
];

const markers: [number, number][] = [
  [360, 1066], [337, 1090], [315, 1127], [338, 1138], [293, 1154], [315, 1153],
  [335, 1160], [317, 1170], [272, 1177], [338, 1182], [293, 1177], [327, 1197],
  [325, 1215], [340, 1228], [296, 1222], [332, 1227], [353, 1248], [329, 1275],
  [342, 1288], [325, 1294], [309, 1311], [328, 1315], [346, 1296], [342, 1335],
  [308, 1319], [316, 1346], [353, 1387],
];

const PIN_PATH =
  "M26 45C21 38 12 32 12 24A14 14 0 0 1 40 24C40 32 31 38 26 45ZM26 17A7 7 0 1 0 26 31A7 7 0 1 0 26 17Z";

function RegionMap() {
  return (
    <svg
      className="block h-full w-[32%] bg-[#809b88]"
      viewBox="0 147 345 2190"
      preserveAspectRatio="xMinYMin slice"
      role="img"
      aria-label="Mapa"
      fontFamily="Roboto, sans-serif"
    >
      {areaLayers.map((layer) =>
        tiles.map((tile) => (
          <g key={layer.key + tile.y} transform={`translate(0 ${tile.y}) scale(0.33333)`} fill={layer.fill}>
            {(tile[layer.key] as string[]).map((points) => (
              <polygon key={points} points={points} />
            ))}
          </g>
        )),
      )}
      {lineLayers.map((layer, index) =>
        tiles.map((tile) => (
          <g
            key={`${index}-${tile.y}`}
            transform={`translate(0 ${tile.y}) scale(0.33333)`}
            fill="none"
            stroke={layer.stroke}
            strokeWidth={layer.width}
            strokeDasharray={layer.dash}
            strokeLinejoin="round"
            strokeLinecap={layer.dash ? "butt" : "round"}
          >
            {(tile[layer.key] as string[]).map((points) => (
              <polyline key={points} points={points} />
            ))}
          </g>
        )),
      )}

      {shields.map((s) => (
        <g key={s.text + s.y}>
          <rect x={s.x} y={s.y} width={s.w} height="32" fill="#29558e" />
          <text x={s.x + s.w / 2} y={s.y + 24} textAnchor="middle" fontSize="22" fontWeight="500" fill="#b2b5ba">
            {s.text}
          </text>
        </g>
      ))}

      {dots.map((d) => (
        <circle
          key={`${d.x}-${d.y}`}
          cx={d.x}
          cy={d.y}
          r={d.r}
          fill="#b0b2b2"
          stroke={d.big ? "#141414" : "#4a4a4c"}
          strokeWidth={d.big ? 2 : 1.5}
        />
      ))}
      {towns.map((t) => (
        <text
          key={t.text}
          x={t.x}
          y={t.y}
          fontSize={t.size}
          fontWeight={t.weight ?? 400}
          textAnchor={t.anchor ?? "start"}
          fill={t.color ?? "#1b1c1e"}
          stroke="#a0a9a2"
          strokeWidth="5"
          strokeLinejoin="round"
          paintOrder="stroke"
        >
          {t.text}
        </text>
      ))}

      <g fill="none" stroke="#050505" strokeWidth="5" strokeLinejoin="round" strokeLinecap="round">
        <path d="M316 1074l-5-12 15-8 10 9M272 1200l4 8M282 1245l2 17 8 1 8 3 5-3v-15M302 1283l-18 2-8 5-1 8 4 6M288 1338l3 8M333 1367l2 3" />
      </g>
      {markers.map(([x, y]) => (
        <g key={`${x}-${y}`} transform={`translate(${x - 26} ${y - 26})`}>
          <circle cx="26" cy="26" r="25" fill="#1f5193" />
          <path d={PIN_PATH} fill="#b0b2b5" fillRule="evenodd" />
        </g>
      ))}

      <text
        x="16"
        y="2305"
        fontFamily="Lato, sans-serif"
        fontSize="46"
        fontWeight="500"
        stroke="#a6a9a7"
        strokeWidth="4"
        strokeLinejoin="round"
        paintOrder="stroke"
      >
        <tspan fill="#2f5fae">G</tspan>
        <tspan fill="#a63128">o</tspan>
        <tspan fill="#b08604">o</tspan>
        <tspan fill="#2f5fae">g</tspan>
        <tspan fill="#217a3a">l</tspan>
        <tspan fill="#a63128">e</tspan>
      </text>
    </svg>
  );
}

type Theme = { badge: string; thumb: string; track: string };

type Group = { title: string; theme: Theme; items: string[] };

const groups: Group[] = [
  {
    title: "Agentes de Proteção Civil",
    theme: { badge: "text-[#ff2d53]", thumb: "bg-[#f82d52]", track: "bg-[#f8c4cd]" },
    items: [
      "Autoridade nacional/distrital",
      "Bombeiros",
      "Cruz Vermelha",
      "GNR",
      "Policia",
      "Serviços municipais de proteção civil",
    ],
  },
  {
    title: "Empresas de apoio",
    theme: { badge: "text-[#8c6504]", thumb: "bg-[#8b6606]", track: "bg-[#d4c7a7]" },
    items: ["Transporte de passageiros", "Transporte de mercadorias", "Construção civil", "Catering"],
  },
  {
    title: "Equipamentos de utilização colectiva",
    theme: { badge: "text-[#2f75d8]", thumb: "bg-[#2f74d2]", track: "bg-[#bad2f5]" },
    items: [
      "Educação/investigação",
      "Equipamentos de saúde",
      "Equipamentos sociais",
      "Espaços culturais",
      "Espaços comerciais",
      "Instalações de recreio",
      "Locais de culto",
    ],
  },
  {
    title: "Infraestruturas",
    theme: { badge: "text-[#d5e852]", thumb: "bg-[#d2e353]", track: "bg-[#dbe2b2]" },
    items: ["Obras de arte", "Pontos de água", "Postos de abastecimento", "Zonas industriais", "Aeródromos"],
  },
];

function ResourceRow({
  name,
  theme,
  checked,
  onToggle,
}: {
  name: string;
  theme: Theme;
  checked: boolean;
  onToggle: () => void;
}) {
  return (
    <label className="flex min-h-[79px] cursor-pointer items-start justify-between">
      <span className="max-w-[556px] pt-4 text-[37px] leading-[43px]">{name}</span>
      <span className="relative mt-2.5 mr-[9px] flex h-[53px] w-[104px] shrink-0 items-center">
        <input
          type="checkbox"
          role="switch"
          checked={checked}
          onChange={onToggle}
          className="peer absolute inset-0 z-10 m-0 cursor-pointer opacity-0"
        />
        <span className={`mx-auto h-[37px] w-[62px] rounded-full ${theme.track}`} />
        <span
          className={`absolute top-0 left-0 size-[53px] rounded-full shadow-[0_2px_4px_rgba(0,0,0,0.35)] peer-checked:left-[51px] ${theme.thumb}`}
        />
      </span>
    </label>
  );
}

function ResourceDrawer() {
  const [active, setActive] = useState<Record<string, boolean>>({ "Educação/investigação": true });

  return (
    <aside className="relative w-[68%] overflow-y-auto bg-[#fafafa] px-[26px] text-[#737373] shadow-[0_0_18px_rgba(0,0,0,0.45)] [scrollbar-width:none]">
      <h2 className="border-b-[5px] border-[#166489] pt-[45px] pb-[13px] text-center text-[39px] leading-[47px]">
        Listagem Recursos
      </h2>
      <div className="pt-[7px]">
        {groups.map((group) => (
          <section key={group.title}>
            <header className="mt-[19px] flex min-h-[60px] items-start gap-[26px]">
              <svg className={`size-[53px] shrink-0 ${group.theme.badge}`} viewBox="0 0 52 52" aria-hidden="true">
                <circle cx="26" cy="26" r="26" fill="currentColor" />
                <path d={PIN_PATH} fill="#fff" stroke="#000" strokeOpacity="0.06" strokeWidth="1" fillRule="evenodd" />
              </svg>
              <h3 className="max-w-[500px] pt-[7px] pb-2 text-[37px] leading-[43px] font-bold">{group.title}</h3>
            </header>
            {group.items.map((item) => (
              <ResourceRow
                key={item}
                name={item}
                theme={group.theme}
                checked={!!active[item]}
                onToggle={() => setActive((prev) => ({ ...prev, [item]: !prev[item] }))}
              />
            ))}
          </section>
        ))}
      </div>
    </aside>
  );
}

function TopBar() {
  return (
    <header className="relative z-10 flex h-[147px] shrink-0 items-center bg-white pr-16 pb-0.5 pl-[62px] text-[#166489] shadow-[0_2px_10px_rgba(0,0,0,0.25)]">
      <button type="button" aria-label="Voltar" className="cursor-pointer">
        <svg className="h-[78px] w-[79px]" viewBox="0 0 79 78" fill="currentColor" aria-hidden="true">
          <path d="M0 39L39 0L46 6L18.500 34H79V44H18.500L46 72L39 78Z" />
        </svg>
      </button>
      <h1 className="mb-1 ml-[72px] text-[48px] leading-none font-bold">MAPA</h1>
      <nav className="ml-auto flex items-center gap-[62px]">
        <button type="button" aria-label="Recursos" className="cursor-pointer">
          <svg className="h-[66px] w-[47px]" viewBox="38 59 142 200" fill="none" stroke="currentColor" strokeWidth="11">
            <path d="M109 248L53 161C47 151 44 141 44 130A65 65 0 0 1 174 130C174 141 171 151 165 161Z" />
            <circle cx="108" cy="130" r="29" />
          </svg>
        </button>
        <button type="button" aria-label="Riscos" className="cursor-pointer">
          <svg className="size-[66px]" viewBox="-33 -35 66 66" fill="currentColor">
            <circle r="7.500" />
            {[0, 120, 240].map((angle) => (
              <path
                key={angle}
                transform={`rotate(${angle})`}
                stroke="currentColor"
                strokeLinejoin="round"
                d="M-6 -10L-16 -27.500A32 32 0 0 1 16 -27.500L6 -10A12 12 0 0 0 -6 -10Z"
              />
            ))}
          </svg>
        </button>
        <button type="button" aria-label="Incêndios" className="cursor-pointer">
          <svg className="h-[66px] w-[46px]" viewBox="753 59 138 200" fill="currentColor">
            <path d="M799 59C817 72 841 92 850 125C856 145 853 170 851 190C862 182 872 160 869 122C882 140 890 165 890 190C890 220 875 245 849 258C855 242 858 230 856 216L836 229C822 213 813 195 813 161C790 178 777 208 791 258C765 248 754 222 754 193C756 160 779 145 792 115C801 92 802 75 799 59Z" />
          </svg>
        </button>
      </nav>
    </header>
  );
}

export default function App() {
  return (
    <div className="flex h-screen flex-col overflow-hidden bg-white font-[Roboto,sans-serif]">
      <TopBar />
      <main className="flex min-h-0 flex-1 overflow-hidden">
        <RegionMap />
        <ResourceDrawer />
      </main>
      <footer className="flex h-[63px] shrink-0 items-center justify-center bg-black">
        <div className="h-2.5 w-[284px] rounded-full bg-[#ebebeb]" />
      </footer>
    </div>
  );
}
